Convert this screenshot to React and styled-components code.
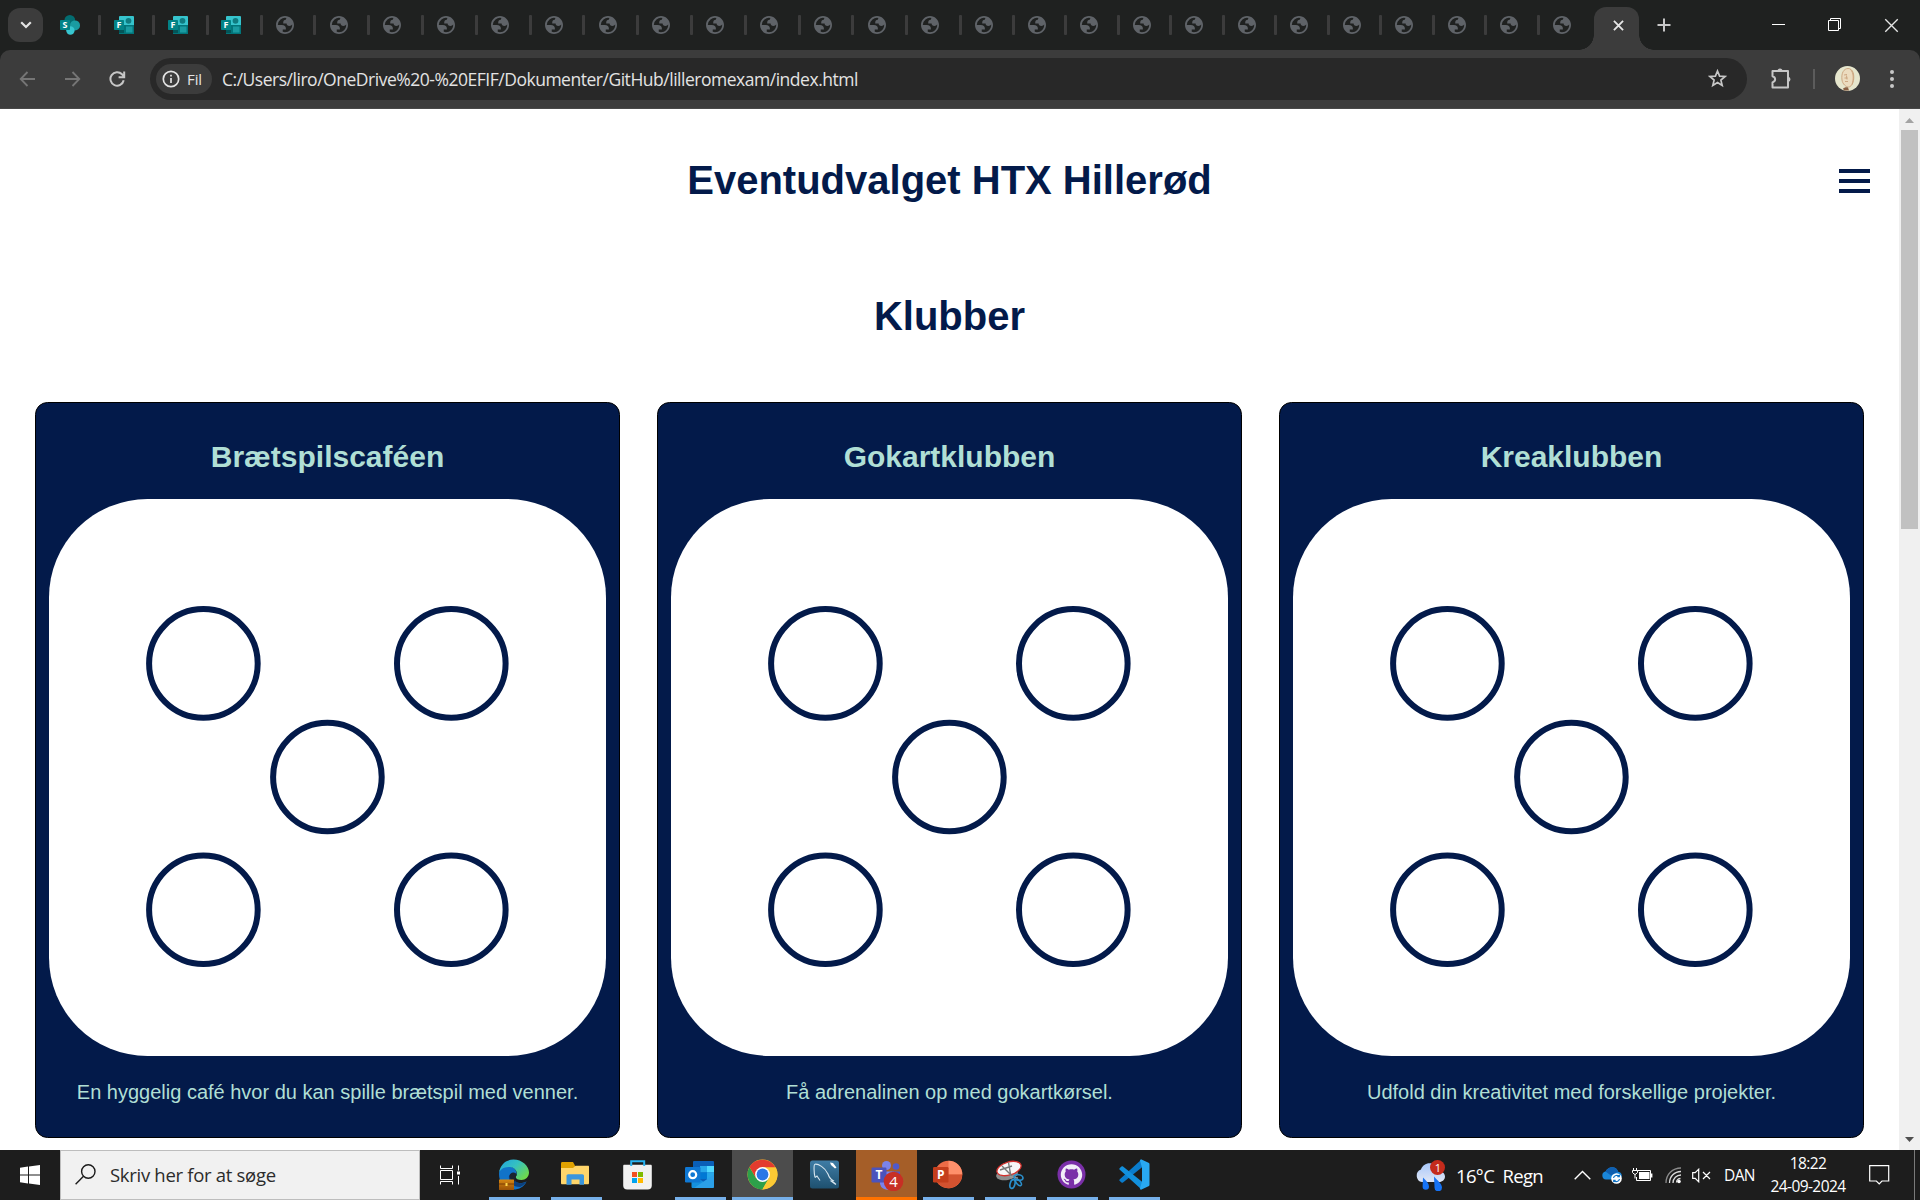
import React from "react";
import styled, { createGlobalStyle } from "styled-components";

const NAVY = "#031a4a";
const MINT = "#b0dfd5";

const GlobalStyle = createGlobalStyle`
  *, *::before, *::after { box-sizing: border-box; }
  html, body { margin: 0; padding: 0; overflow: hidden; background: #fff; }
  svg { display: block; flex: none; }
  h1, h2, h3, p { margin: 0; }
`;

const Screen = styled.div`
  width: 1920px;
  height: 1200px;
  display: flex;
  flex-direction: column;
  overflow: hidden;
  font-family: "Open Sans", "Noto Sans", sans-serif;
`;

/* ---------- Browser tab strip ---------- */

const TabStrip = styled.header`
  height: 50px;
  flex: none;
  display: flex;
  align-items: center;
  background: #1f2120;
`;

const TabSearch = styled.button`
  width: 35px;
  height: 34px;
  margin: 0 3px 0 8px;
  padding: 0;
  border: 0;
  border-radius: 12px;
  background: #3c3c3c;
  display: grid;
  place-items: center;
`;

const Tab = styled.div`
  width: ${(p) => p.$width}px;
  height: 20px;
  flex: none;
  display: flex;
  align-items: center;
  justify-content: space-between;
  padding-left: ${(p) => p.$inset}px;
  margin-right: ${(p) => (p.$last ? 3.4 : 0)}px;
`;

const TabDivider = styled.span`
  width: 3px;
  height: 20px;
  margin-right: -1.5px;
  border-radius: 1px;
  background: #3c3c3c;
`;

const ActiveTab = styled.div`
  position: relative;
  width: 45px;
  height: 43px;
  flex: none;
  align-self: flex-end;
  display: grid;
  place-items: center;
  padding: 0 0 7px 5px;
  border-radius: 12px 12px 0 0;
  background: #3c3c3c;

  &::before,
  &::after {
    content: "";
    position: absolute;
    bottom: 0;
    width: 15px;
    height: 15px;
  }
  &::before {
    left: -15px;
    background: radial-gradient(circle at 0 0, transparent 14.5px, #3c3c3c 15px);
  }
  &::after {
    right: -15px;
    background: radial-gradient(circle at 100% 0, transparent 14.5px, #3c3c3c 15px);
  }
`;

const NewTab = styled.div`
  margin-left: 18px;
`;

const WindowControls = styled.div`
  margin-left: auto;
  padding-right: 21px;
  display: flex;
  align-items: center;
  gap: 43px;
`;

/* ---------- Browser toolbar ---------- */

const ToolbarBack = styled.div`
  height: 59px;
  flex: none;
  background: #1f2120;
`;

const Toolbar = styled.div`
  height: 59px;
  padding: 8px 0 9px 19px;
  display: flex;
  align-items: center;
  background: #3c3c3c;
  border-radius: 10px 10px 0 0;
  border-bottom: 1px solid #484848;
`;

const NavButtons = styled.div`
  width: 131px;
  display: flex;
  align-items: center;
  gap: 28px;
`;

const AddressBar = styled.div`
  width: 1597px;
  height: 42px;
  display: flex;
  align-items: center;
  padding: 0 20px 0 6px;
  border-radius: 21px;
  background: #282828;
`;

const SchemeChip = styled.div`
  width: 56px;
  height: 30px;
  display: flex;
  align-items: center;
  gap: 7px;
  padding-left: 6px;
  border-radius: 15px;
  background: #3c3c3c;
  color: #e3e3e3;
  font-size: 15px;
  font-weight: 500;
  letter-spacing: -0.1px;
`;

const Url = styled.div`
  flex: 1;
  margin-left: 10px;
  padding-top: 1px;
  color: #e3e3e3;
  font-size: 17.5px;
  letter-spacing: -0.48px;
  white-space: nowrap;
`;

const ToolbarActions = styled.div`
  display: flex;
  align-items: center;
  padding-left: 23px;
`;

const ActionDivider = styled.span`
  width: 2px;
  height: 20px;
  margin: 0 20px 0 21px;
  background: #5c5c5c;
`;

const Dots = styled.div`
  margin-left: 30px;
  display: grid;
  gap: 3px;

  i {
    width: 4px;
    height: 4px;
    border-radius: 50%;
    background: #c7c7c7;
  }
`;

/* ---------- Page ---------- */

const Viewport = styled.div`
  height: 1041px;
  flex: none;
  display: flex;
  background: #fff;
`;

const Page = styled.main`
  width: 1899px;
  font-family: "Liberation Sans", Arial, sans-serif;
  color: ${NAVY};
`;

const SiteHeader = styled.div`
  height: 143px;
  padding: 0 29px;
  display: grid;
  grid-template-columns: 31px 1fr 31px;
  align-items: center;
  text-align: center;
`;

const SiteTitle = styled.h1`
  padding-bottom: 2px;
  font-size: 40px;
  line-height: 46px;
  white-space: nowrap;
`;

const Burger = styled.div`
  display: grid;
  gap: 6px;

  span {
    height: 4px;
    background: ${NAVY};
  }
`;

const SectionTitle = styled.h2`
  height: 150px;
  padding-top: 41px;
  font-size: 40px;
  line-height: 46px;
  text-align: center;
`;

const CardGrid = styled.section`
  display: grid;
  grid-template-columns: repeat(3, 585px);
  justify-content: center;
  gap: 37px;
`;

const Card = styled.article`
  height: 736px;
  display: flex;
  flex-direction: column;
  align-items: center;
  padding-top: 36px;
  border: 1px solid #000;
  border-radius: 12.5px;
  background: ${NAVY};
  color: ${MINT};
`;

const CardTitle = styled.h3`
  height: 60px;
  font-size: 30px;
  line-height: 35px;
`;

const CardText = styled.p`
  margin-top: 25px;
  font-size: 20px;
  line-height: 23px;
  white-space: nowrap;
`;

const Scrollbar = styled.div`
  width: 21px;
  padding: 9px 2px 8px;
  display: flex;
  flex-direction: column;
  align-items: center;
  background: #f0f0f0;
`;

const ScrollThumb = styled.div`
  width: 17px;
  height: 399px;
  margin: 7px 0 auto;
  background: #c1c1c1;
`;

/* ---------- Taskbar ---------- */

const Taskbar = styled.footer`
  height: 50px;
  flex: none;
  display: flex;
  align-items: center;
  background: #1d1d1d;
  color: #fff;
`;

const StartButton = styled.div`
  width: 60px;
  display: grid;
  place-items: center;
`;

const SearchBox = styled.div`
  width: 360px;
  height: 50px;
  display: flex;
  align-items: center;
  gap: 14px;
  padding: 0 0 1px 14px;
  border: 1px solid #bdbdbd;
  background: #f1f1f1;
  color: #2b2b2b;
  font-size: 18.5px;
  line-height: 24px;
  letter-spacing: -0.3px;
  white-space: nowrap;
`;

const TaskView = styled.div`
  width: 64px;
  padding-left: 20px;
`;

const Apps = styled.div`
  display: flex;
  gap: 1px;
  height: 50px;
`;

const AppCell = styled.div`
  width: 61px;
  height: 50px;
  display: flex;
  flex-direction: column;
  align-items: center;
  justify-content: space-between;
  padding-top: 9px;
  background: ${(p) => p.$bg || "transparent"};

  svg {
    align-self: flex-start;
    margin-left: ${(p) => p.$left || 15}px;
  }

  &::after {
    content: "";
    width: ${(p) => (p.$bg ? 61 : 51)}px;
    height: 3px;
    background: ${(p) => p.$bar || "transparent"};
  }
`;

const Tray = styled.div`
  margin-left: auto;
  height: 50px;
  display: flex;
  align-items: center;
`;

const Weather = styled.div`
  width: 159px;
  display: flex;
  align-items: center;
  gap: 10px;
  font-size: 18.5px;
  letter-spacing: -0.65px;
  white-space: pre;
`;

const TrayIcons = styled.div`
  width: 150px;
  display: flex;
  align-items: center;
`;

const TrayIcon = styled.div`
  width: ${(p) => p.$width}px;
`;

const Language = styled.div`
  width: 46px;
  font-size: 15.5px;
  letter-spacing: -0.6px;
`;

const Clock = styled.div`
  width: 76px;
  text-align: center;
  font-size: 15.5px;
  line-height: 23px;
  letter-spacing: -0.6px;
  white-space: nowrap;
`;

const Notifications = styled.div`
  width: 45px;
  margin-left: 23px;
`;

const ShowDesktop = styled.div`
  width: 6px;
  height: 50px;
  border-left: 1px solid #7a7a7a;
`;

/* ---------- Drawings ---------- */

const glyph = { fontFamily: '"Open Sans", sans-serif', fontWeight: 700 };

const SharePointIcon = () => (
  <svg width="20" height="20" viewBox="0 0 20 20">
    <circle cx="9.8" cy="5.4" r="5.4" fill="#036c70" />
    <circle cx="15" cy="10.4" r="5" fill="#1a9ba1" />
    <circle cx="10.4" cy="15.5" r="4.2" fill="#37c6d0" />
    <rect x="0" y="5" width="10" height="10" rx="0.8" fill="#038387" />
    <text x="5" y="13.2" textAnchor="middle" fontSize="9" fill="#fff" style={glyph}>S</text>
  </svg>
);

const FormsIcon = () => (
  <svg width="20" height="18" viewBox="0 0 20 18">
    <rect x="5" width="15" height="18" rx="1" fill="#36c4cd" />
    <rect x="5" y="9" width="15" height="9" fill="#02757a" />
    <rect x="12" y="10.5" width="6.5" height="6" fill="#1a9ba1" />
    <circle cx="14.5" cy="4.8" r="2.9" fill="#107b80" />
    <rect x="5" y="14" width="5" height="3" fill="#035558" />
    <rect x="0" y="4" width="10" height="10" rx="0.8" fill="#038387" />
    <text x="5" y="12.2" textAnchor="middle" fontSize="9" fill="#fff" style={glyph}>F</text>
  </svg>
);

const GlobeIcon = () => (
  <svg width="18" height="18" viewBox="2 2 20 20">
    <path
      fillRule="evenodd"
      fill="#5f6368"
      d="M12 2c5.523 0 10 4.477 10 10s-4.477 10-10 10S2 17.523 2 12 6.477 2 12 2ZM4 12h4.4c3.407.022 4.922 1.73 4.543 5.127H9.488v2.470a8.004 8.004 0 0 0 10.498-8.083C19.327 12.504 18.332 13 17 13c-2.137 0-3.206-.916-3.206-2.750h-3.748c-.274-2.728.683-4.092 2.870-4.092 0-.975.327-1.597.811-1.970A8.004 8.004 0 0 0 4 12Z"
    />
  </svg>
);

const CrossIcon = ({ size, width }) => (
  <svg width={size} height={size} viewBox="0 0 12 12" stroke="#e6e6e6" strokeWidth={width}>
    <path d="M1 1l10 10M11 1L1 11" />
  </svg>
);

const Die = () => (
  <svg width="557" height="557" viewBox="0 0 557 557">
    <rect width="557" height="557" rx="98.5" fill="#fff" />
    <g fill="none" stroke={NAVY} strokeWidth="6">
      <circle cx="154.4" cy="164.4" r="54.3" />
      <circle cx="402.3" cy="164.4" r="54.3" />
      <circle cx="278.4" cy="278" r="54.3" />
      <circle cx="154.4" cy="410.8" r="54.3" />
      <circle cx="402.3" cy="410.8" r="54.3" />
    </g>
  </svg>
);

const EdgeIcon = () => (
  <svg width="31" height="31" viewBox="0 0 31 31">
    <defs>
      <linearGradient id="edgeTop" x1="0" y1="0" x2="1" y2="0.7">
        <stop offset="0" stopColor="#1fa2e0" />
        <stop offset="0.5" stopColor="#35c1c1" />
        <stop offset="1" stopColor="#6fd94b" />
      </linearGradient>
      <linearGradient id="edgeBag" x1="0" y1="0" x2="0" y2="1">
        <stop offset="0" stopColor="#d68813" />
        <stop offset="1" stopColor="#9a5106" />
      </linearGradient>
    </defs>
    <path d="M1 15C1 9 7 6.500 12 7.500c4 .8 7 4 6.500 7.500-.3 1.500-2 2.500-2 4.500 0 4 5 6.500 12 3C26 28 21 30.500 15.500 30.500 7 30.500 1 24 1 15z" fill="#1173c9" />
    <path d="M11 17c-1 6 4 11 11 11 3-1 5-3 6.500-5.500-6 3.500-12 1-12-3 0-1.500.8-2.500 1.500-3.500-2-2.500-6-1.500-7 1z" fill="#0c3f7c" />
    <path d="M1 14C2 5.500 8 .5 15.500.5 24 .5 31 7 31 13.500c0 4.500-3.500 7.500-7.500 7.500-4 0-6.500-1.500-5.500-3.500 2.500-3 0-9-6-9.500C6 7.500 2 10.500 1 14z" fill="url(#edgeTop)" />
    <path d="M11.500 17c.5-3 3.500-4.500 6.500-2.500.6 1 .4 2-.2 3-1.300 2-.8 3.500.7 4.500l-1 .5c-3-.5-6-2.500-6-5.500z" fill="#1b2430" />
    <rect x="1" y="20.500" width="15" height="10.500" rx="0.5" fill="url(#edgeBag)" />
    <path d="M1 25h15" stroke="#7a3f04" />
    <rect x="7.500" y="24" width="2" height="3" fill="#ffd54a" />
  </svg>
);

const ExplorerIcon = () => (
  <svg width="30" height="31" viewBox="0 0 30 31">
    <path d="M0 4.500c0-.8.500-1.500 1.300-1.500H12l2 3.500v3H0z" fill="#e0a100" />
    <path d="M0 9h12l2.500-2.300H27c.8 0 1 .5 1 1.200V24c0 .8-.4 1.300-1.200 1.300H1.200C.4 25.300 0 24.800 0 24z" fill="#ffd66b" />
    <path d="M5.500 25.800V17c0-1 .6-1.700 1.700-1.700h14.100c1.100 0 1.700.7 1.700 1.700v8.800h-4.500V20.500h-8v5.300z" fill="#3a96dd" />
  </svg>
);

const StoreIcon = () => (
  <svg width="30" height="31" viewBox="0 0 30 31">
    <path d="M.2 7c0-.8.400-1.200 1.200-1.200h26.200c.8 0 1.200.4 1.200 1.200v19.500c0 2.500-1.500 4-4 4H4.200c-2.500 0-4-1.500-4-4z" fill="#f1f1f1" />
    <path d="M8.200 7V2.300h13V7" fill="none" stroke="#28b5f4" strokeWidth="2" />
    <rect x="9" y="13" width="5" height="5" fill="#f25022" />
    <rect x="15" y="13" width="5" height="5" fill="#7fba00" />
    <rect x="9" y="19" width="5" height="5" fill="#00a4ef" />
    <rect x="15" y="19" width="5" height="5" fill="#ffb900" />
  </svg>
);

const OutlookIcon = () => (
  <svg width="30" height="31" viewBox="0 0 30 31">
    <rect x="8" y="2" width="21" height="22" rx="1" fill="#0a5fb8" />
    <rect x="15" y="7" width="7" height="6.500" fill="#28a8ea" />
    <rect x="22" y="7" width="7" height="6.500" fill="#50d9ff" />
    <rect x="15" y="13.500" width="7" height="6.500" fill="#0078d4" />
    <rect x="22" y="13.500" width="7" height="6.500" fill="#28a8ea" />
    <path d="M6.500 15.500L29 29H8c-1 0-1.500-.5-1.500-1.500z" fill="#1490df" />
    <path d="M29 15.500V27.500c0 1-.5 1.500-1.500 1.500H9z" fill="#2ba0e8" />
    <rect x="0" y="8" width="15.500" height="15.500" rx="1.200" fill="#0f78d4" />
    <circle cx="7.700" cy="15.700" r="3.500" fill="none" stroke="#fff" strokeWidth="2.200" />
  </svg>
);

const ChromeIcon = () => (
  <svg width="31" height="31" viewBox="0 0 31 31">
    <circle cx="15.500" cy="15.500" r="15" fill="#fcc934" />
    <path d="M2.500 8a15 15 0 0 0 12.900 22.500L22 19l-6.500-3.500L9 19z" fill="#2da04a" />
    <path d="M15.500 8.500h13A15 15 0 0 0 2.500 8L9 19l6.500-3.500z" fill="#e33b2e" />
    <path d="M22 19l-6.600 11.500A15 15 0 0 0 28.800 8.500H15.500z" fill="#fcc934" />
    <circle cx="15.500" cy="15.500" r="7.400" fill="#fff" />
    <circle cx="15.500" cy="15.500" r="5.900" fill="#2a78e6" />
  </svg>
);

const WorkbenchIcon = () => (
  <svg width="29" height="31" viewBox="0 0 29 31">
    <defs>
      <linearGradient id="wb" x1="0" y1="0" x2="0" y2="1">
        <stop offset="0" stopColor="#3f7da6" />
        <stop offset="1" stopColor="#1e506f" />
      </linearGradient>
    </defs>
    <rect y="1.500" width="29" height="28" rx="2.500" fill="url(#wb)" />
    <path d="M5 18.500C4 14 3.500 5.500 5 5.200c3-.5 10 3 13 9.800 1 3 2 5 5 6.500l-2 .5 4.500 3.200M5 18.500l2-1.500 3 4.500M22 22l4 3.500" fill="none" stroke="#d7e6ef" strokeWidth="1.100" />
    <path d="M20 3.500l3 .5 3.500 4.500-1.500 1-4-3.500z" fill="#fff" />
  </svg>
);

const TeamsIcon = () => (
  <svg width="34" height="32" viewBox="0 0 34 32">
    <circle cx="16.500" cy="6.500" r="4.500" fill="#7b83eb" />
    <circle cx="26" cy="7.500" r="3.300" fill="#5059c9" />
    <path d="M10 12.500h14V22a7 7 0 0 1-14 3z" fill="#7b83eb" />
    <path d="M22 12.500h8V22h-8z" fill="#5059c9" />
    <rect x="1.500" y="8.500" width="15" height="15" rx="1.200" fill="#4b53bc" />
    <text x="9" y="20.300" textAnchor="middle" fontSize="12" fill="#fff" style={glyph}>T</text>
    <circle cx="23.500" cy="22.500" r="9.800" fill="#c72f24" />
    <text x="23.500" y="28" textAnchor="middle" fontSize="15" fill="#fff" fontFamily="Open Sans">4</text>
  </svg>
);

const PowerPointIcon = () => (
  <svg width="30" height="31" viewBox="0 0 30 31">
    <circle cx="15.500" cy="15.500" r="13.800" fill="#ed6c47" />
    <path d="M15.500 1.700a13.800 13.800 0 0 1 13.800 13.800H15.500z" fill="#ff8f6b" />
    <path d="M29.300 15.500a13.800 13.800 0 0 1-26.600 5l12.800-5z" fill="#d35230" />
    <rect x="0" y="8" width="15.500" height="15.500" rx="1.200" fill="#c43e1c" />
    <text x="7.700" y="20" textAnchor="middle" fontSize="12" fill="#fff" style={glyph}>P</text>
  </svg>
);

const SnippingIcon = () => (
  <svg width="31" height="31" viewBox="0 0 31 31">
    <ellipse cx="12" cy="15.500" rx="11" ry="5.500" transform="rotate(-10 12 15.500)" fill="#8d8d8d" />
    <ellipse cx="14" cy="9.500" rx="12.500" ry="6.500" transform="rotate(-17 14 9.500)" fill="#f7f7f7" stroke="#d2302c" strokeWidth="1.300" />
    <path d="M5 11l12-4M13.500 3.500L16 18M7 7l10 10" stroke="#777" strokeWidth="1.400" />
    <path d="M15 17.500c3 .5 5 2 8 1.500" stroke="#9a9a9a" strokeWidth="1.500" />
    <ellipse cx="23.500" cy="18.500" rx="4.500" ry="2.800" transform="rotate(10 23.500 18.500)" fill="none" stroke="#2b8fcb" strokeWidth="1.700" />
    <ellipse cx="17.500" cy="25" rx="2.400" ry="4.500" transform="rotate(15 17.500 25)" fill="none" stroke="#2b8fcb" strokeWidth="1.700" />
    <ellipse cx="23.500" cy="23.500" rx="2" ry="3.800" transform="rotate(-40 23.500 23.500)" fill="none" stroke="#2b8fcb" strokeWidth="1.500" />
  </svg>
);

const GitHubIcon = () => (
  <svg width="30" height="31" viewBox="0 0 30 31">
    <circle cx="14.500" cy="15.500" r="14" fill="#7a2fa8" />
    <g transform="translate(3.800 4.800) scale(0.892)">
      <path
        fill="#f2eef8"
        d="M12 .5C5.370.5 0 5.780 0 12.292c0 5.211 3.438 9.630 8.205 11.188.6.111.82-.254.82-.567 0-.28-.01-1.022-.015-2.005-3.338.711-4.042-1.582-4.042-1.582-.546-1.361-1.335-1.725-1.335-1.725-1.087-.731.084-.716.084-.716 1.205.082 1.838 1.215 1.838 1.215 1.070 1.803 2.809 1.282 3.495.981.108-.763.417-1.282.760-1.577-2.665-.295-5.466-1.309-5.466-5.827 0-1.287.465-2.339 1.235-3.164-.135-.298-.54-1.497.105-3.121 0 0 1.005-.316 3.300 1.209.96-.262 1.980-.392 3-.398 1.020.006 2.040.136 3 .398 2.280-1.525 3.285-1.209 3.285-1.209.645 1.624.240 2.823.120 3.121.765.825 1.230 1.877 1.230 3.164 0 4.530-2.805 5.527-5.475 5.817.420.354.810 1.077.810 2.182 0 1.578-.015 2.846-.015 3.229 0 .309.210.678.825.560C20.565 21.917 24 17.495 24 12.292 24 5.780 18.627.5 12 .5z"
      />
    </g>
  </svg>
);

const CodeIcon = () => (
  <svg width="31" height="31" viewBox="0 0 31 31">
    <path d="M22.500.5L24 7.500 4 23.500c-.5.4-1 .4-1.500 0L.8 22c-.6-.5-.6-1.300 0-1.800z" fill="#0a7ccc" />
    <path d="M22.500 30.500L24 23.500 4 7.500c-.5-.4-1-.4-1.500 0L.8 9c-.6.500-.6 1.300 0 1.800z" fill="#1290dd" />
    <path d="M22.500.6l7 3.200c.7.300 1 .8 1 1.500v20.400c0 .7-.3 1.200-1 1.500l-7 3.200c-.7.200-1.200 0-1.700-.5L23 28V3l-2.200-1.900c.5-.5 1-.7 1.700-.5z" fill="#29a9f2" />
    <path d="M20.800 1.100L23 8.500v14l-2.200 7.400 2.700-.9V2z" fill="#29a9f2" />
  </svg>
);

const WeatherIcon = () => (
  <svg width="31" height="31" viewBox="0 0 31 31">
    <defs>
      <linearGradient id="cloud" x1="0" y1="0" x2="0" y2="1">
        <stop offset="0" stopColor="#a9c8fb" />
        <stop offset="1" stopColor="#dfe6f5" />
      </linearGradient>
    </defs>
    <path d="M7 22a6.500 6.500 0 0 1-1-12.500C7.500 5 12 2.500 16.500 3.500c4 .8 6.500 4 7 7.500 4 .5 6.500 2.500 6.500 5.500s-2.500 5.500-6 5.500z" fill="url(#cloud)" />
    <path d="M8 17.500c3 3 6 6 6 9a3.200 3.200 0 0 1-6.400 0c0-3 .4-6 .4-9zM19 16.500c3.500 4 8 7.500 8 11a3.500 3.500 0 0 1-7.500 0c0-4-.5-7-.5-11z" fill="#1673f5" />
    <circle cx="22.500" cy="7.500" r="7.500" fill="#c42b1c" />
    <text x="22.500" y="11.500" textAnchor="middle" fontSize="11" fill="#fff" fontFamily="Open Sans">1</text>
  </svg>
);

const ChevronUp = () => (
  <svg width="17" height="10" viewBox="0 0 17 10" fill="none" stroke="#fff" strokeWidth="1.400">
    <path d="M.7 9.200L8.500 1.400l7.800 7.800" />
  </svg>
);

const OneDriveIcon = () => (
  <svg width="20" height="18" viewBox="0 0 20 18">
    <path d="M4 13.500a4 4 0 0 1-.5-7.900C5 2.500 8 .8 11 1.300c2.800.4 4.500 2.200 5.200 4.500 2.300.4 3.600 1.900 3.600 4 0 2.200-1.700 3.700-3.800 3.700z" fill="#1a86d9" />
    <path d="M3.500 5.600C5 2.500 8 .8 11 1.300c2.800.4 4.500 2.200 5.200 4.500L9 9.500z" fill="#0f5fb0" />
    <circle cx="14.500" cy="12.500" r="5.300" fill="#fff" />
    <path d="M11.500 12a3.200 3.200 0 0 1 5.600-1.500M17.500 13a3.200 3.200 0 0 1-5.600 1.500M17.300 8.700v2h-2M11.700 16.300v-2h2" fill="none" stroke="#1173c5" strokeWidth="1.200" />
  </svg>
);

const BatteryIcon = () => (
  <svg width="21" height="14" viewBox="0 0 21 14" fill="none" stroke="#fff">
    <path d="M5.500 2.500h13v10H4.500V9" />
    <rect x="7" y="4" width="10.500" height="7" fill="#fff" stroke="none" />
    <path d="M19.700 5.500v4" strokeWidth="1.400" />
    <path d="M1.500 0v2.500M4.500 0v2.500M.5 2.500h5v2L3.800 6.200H2.200L.5 4.500zM3 6v4.500" />
  </svg>
);

const WifiIcon = () => (
  <svg width="17" height="17" viewBox="0 0 17 17" fill="none" strokeWidth="1.300">
    <path d="M1 16C1 7.500 7.500 1 16 1" stroke="#8c8c8c" />
    <path d="M4.500 16C4.500 9.500 9.500 4.500 16 4.500M8 16c0-4.500 3.500-8 8-8" stroke="#dcdcdc" />
    <path d="M11.500 15.500c0-2.500 2-4 4-4" stroke="#dcdcdc" />
    <circle cx="14" cy="14.500" r="1.800" fill="#fff" />
  </svg>
);

const SpeakerIcon = () => (
  <svg width="19" height="15" viewBox="0 0 19 15" fill="none" stroke="#fff" strokeWidth="1.200">
    <path d="M.7 4.700h2.500L6.700 1.200v12.600L3.200 10.300H.7zM11 4l7 7M18 4l-7 7" />
  </svg>
);

const NotificationIcon = () => (
  <svg width="21" height="20" viewBox="0 0 21 20" fill="none" stroke="#fff" strokeWidth="1.200">
    <path d="M.7.7h19v15.300H13l-2.800 2.900L7.400 16H.7z" />
  </svg>
);

const Avatar = () => (
  <svg width="25" height="25" viewBox="0 0 25 25">
    <circle cx="12.500" cy="12.500" r="12.500" fill="#e6e6cd" />
    <path d="M7 14C6 7 9 2.500 13 2.500c5 0 6.500 6 5.500 12-.5 3-2.500 6.500-5 6.500S7.500 18 7 14z" fill="#ecdcbf" stroke="#c9a27c" strokeWidth="0.900" />
    <path d="M15.500 3.500c3 3 3.500 9 1.500 15M9 9l3-.5M9.500 12h3M10 15.500h3M11.500 9.500l.5 4" fill="none" stroke="#c9a27c" strokeWidth="0.900" />
    <path d="M8 22.500c2-1 3-1.500 5-1l1 3H9z" fill="#8a6044" />
  </svg>
);

/* ---------- Data ---------- */

const TABS = [
  { icon: <SharePointIcon />, width: 53.8, inset: 14 },
  ...Array.from({ length: 3 }, () => ({ icon: <FormsIcon />, width: 53.8, inset: 14 })),
  ...Array.from({ length: 13 }, () => ({ icon: <GlobeIcon />, width: 53.8, inset: 14.7 })),
  ...Array.from({ length: 12 }, () => ({ icon: <GlobeIcon />, width: 52.5, inset: 14.7 })),
];

const CLUBS = [
  { name: "Brætspilscaféen", text: "En hyggelig café hvor du kan spille brætspil med venner." },
  { name: "Gokartklubben", text: "Få adrenalinen op med gokartkørsel." },
  { name: "Kreaklubben", text: "Udfold din kreativitet med forskellige projekter." },
];

const BLUE = "#76b0ea";
const APPS = [
  { icon: <EdgeIcon />, bar: BLUE, left: 14 },
  { icon: <ExplorerIcon />, bar: BLUE },
  { icon: <StoreIcon /> },
  { icon: <OutlookIcon />, bar: BLUE },
  { icon: <ChromeIcon />, bar: BLUE, bg: "#4c4c4c" },
  { icon: <WorkbenchIcon />, left: 16 },
  { icon: <TeamsIcon />, bar: "#ff7200", bg: "#a55e28", left: 13.5 },
  { icon: <PowerPointIcon />, bar: BLUE },
  { icon: <SnippingIcon />, bar: BLUE },
  { icon: <GitHubIcon />, bar: BLUE },
  { icon: <CodeIcon />, bar: BLUE },
];

export default function App() {
  return (
    <Screen>
      <GlobalStyle />
      <TabStrip>
        <TabSearch>
          <svg width="12" height="8" viewBox="0 0 12 8" fill="none" stroke="#e3e3e3" strokeWidth="2.200">
            <path d="M1.200 1.200L6 6l4.800-4.800" />
          </svg>
        </TabSearch>
        {TABS.map((tab, i) => {
          const last = i === TABS.length - 1;
          return (
            <Tab key={i} $width={tab.width} $inset={tab.inset} $last={last}>
              {tab.icon}
              {!last && <TabDivider />}
            </Tab>
          );
        })}
        <ActiveTab>
          <CrossIcon size={11} width={2} />
        </ActiveTab>
        <NewTab>
          <svg width="14" height="14" viewBox="0 0 14 14" stroke="#c7c7c7" strokeWidth="2">
            <path d="M7 .5v13M.5 7h13" />
          </svg>
        </NewTab>
        <WindowControls>
          <svg width="13" height="14" viewBox="0 0 13 14" stroke="#fff">
            <path d="M0 6.500h13" />
          </svg>
          <svg width="13" height="14" viewBox="0 0 13 14" fill="none" stroke="#fff">
            <path d="M.5 2.500h10v10H.5zM2.500 2.500V.5h10v10h-2" />
          </svg>
          <CrossIcon size={15} width={1.1} />
        </WindowControls>
      </TabStrip>

      <ToolbarBack>
        <Toolbar>
          <NavButtons>
            <svg width="17" height="16" viewBox="0 0 17 16" fill="none" stroke="#757575" strokeWidth="1.800">
              <path d="M16 8H2M8.500 1L1.700 8l6.800 7" />
            </svg>
            <svg width="17" height="16" viewBox="0 0 17 16" fill="none" stroke="#757575" strokeWidth="1.800">
              <path d="M1 8h14M8.500 1l6.800 7-6.800 7" />
            </svg>
            <svg width="17" height="16" viewBox="0 0 17 16" fill="none" stroke="#c7c7c7" strokeWidth="2">
              <path d="M14.700 9.300A6.700 6.700 0 1 1 13 3.300l1.800 1.900M15.200.5v5.700H9.600" />
            </svg>
          </NavButtons>
          <AddressBar>
            <SchemeChip>
              <svg width="18" height="18" viewBox="0 0 18 18" fill="none" stroke="#e3e3e3" strokeWidth="1.700">
                <circle cx="9" cy="9" r="7.700" />
                <path d="M9 8v5M9 4.800v1.800" />
              </svg>
              Fil
            </SchemeChip>
            <Url>C:/Users/liro/OneDrive%20-%20EFIF/Dokumenter/GitHub/lilleromexam/index.html</Url>
            <svg width="19" height="19" viewBox="0 0 19 19" fill="none" stroke="#c7c7c7" strokeWidth="1.700">
              <path d="M9.500 2l2.100 5.100 5.500.4-4.200 3.600 1.300 5.400-4.700-2.900-4.700 2.900 1.300-5.400L1.900 7.500l5.500-.4z" />
            </svg>
          </AddressBar>
          <ToolbarActions>
            <svg width="22" height="21" viewBox="0 0 22 21" fill="none" stroke="#c7c7c7" strokeWidth="2">
              <path d="M2.500 3h15.500v16.500H2.500v-5c3.500-1.500 3.500-5 0-6.200z" strokeLinejoin="round" />
              <path d="M7.500 3a2.500 2.500 0 0 1 5 0zM18 8.800a2.500 2.500 0 0 1 0 5z" fill="#c7c7c7" stroke="none" />
            </svg>
            <ActionDivider />
            <Avatar />
            <Dots>
              <i />
              <i />
              <i />
            </Dots>
          </ToolbarActions>
        </Toolbar>
      </ToolbarBack>

      <Viewport>
        <Page>
          <SiteHeader>
            <span />
            <SiteTitle>Eventudvalget HTX Hillerød</SiteTitle>
            <Burger>
              <span />
              <span />
              <span />
            </Burger>
          </SiteHeader>
          <SectionTitle>Klubber</SectionTitle>
          <CardGrid>
            {CLUBS.map((club) => (
              <Card key={club.name}>
                <CardTitle>{club.name}</CardTitle>
                <Die />
                <CardText>{club.text}</CardText>
              </Card>
            ))}
          </CardGrid>
        </Page>
        <Scrollbar>
          <svg width="9" height="5" viewBox="0 0 9 5">
            <path d="M0 5L4.500 0 9 5z" fill="#a3a3a3" />
          </svg>
          <ScrollThumb />
          <svg width="9" height="5" viewBox="0 0 9 5">
            <path d="M0 0l4.500 5L9 0z" fill="#505050" />
          </svg>
        </Scrollbar>
      </Viewport>

      <Taskbar>
        <StartButton>
          <svg width="20" height="20" viewBox="0 0 20 20" fill="#fff">
            <path d="M0 2.700L8 1.600V9.400H0zM9 1.500L20 0v9.400H9zM0 10.500h8v7.900L0 17.300zM9 10.500h11V20L9 18.500z" />
          </svg>
        </StartButton>
        <SearchBox>
          <svg width="21" height="21" viewBox="0 0 21 21" fill="none" stroke="#1a1a1a" strokeWidth="1.400">
            <circle cx="13.300" cy="7.500" r="6.700" />
            <path d="M8.500 12.300L.6 20.300" />
          </svg>
          Skriv her for at søge
        </SearchBox>
        <TaskView>
          <svg width="20" height="20" viewBox="0 0 20 20" fill="none" stroke="#fff">
            <path d="M.5.500v3h12v-3M.5 5.500h12v9H.5zM.5 19.500v-3h12v3M18.500.500v5M18.500 11v8.500" />
            <rect x="17" y="6.500" width="3" height="3" fill="#fff" stroke="none" />
          </svg>
        </TaskView>
        <Apps>
          {APPS.map((app, i) => (
            <AppCell key={i} $bar={app.bar} $bg={app.bg} $left={app.left}>
              {app.icon}
            </AppCell>
          ))}
        </Apps>
        <Tray>
          <Weather>
            <WeatherIcon />
            {"16°C  Regn"}
          </Weather>
          <TrayIcons>
            <TrayIcon $width={28}>
              <ChevronUp />
            </TrayIcon>
            <TrayIcon $width={30}>
              <OneDriveIcon />
            </TrayIcon>
            <TrayIcon $width={33}>
              <BatteryIcon />
            </TrayIcon>
            <TrayIcon $width={27}>
              <WifiIcon />
            </TrayIcon>
            <TrayIcon $width={32}>
              <SpeakerIcon />
            </TrayIcon>
          </TrayIcons>
          <Language>DAN</Language>
          <Clock>
            <div>18:22</div>
            <div>24-09-2024</div>
          </Clock>
          <Notifications>
            <NotificationIcon />
          </Notifications>
          <ShowDesktop />
        </Tray>
      </Taskbar>
    </Screen>
  );
}
